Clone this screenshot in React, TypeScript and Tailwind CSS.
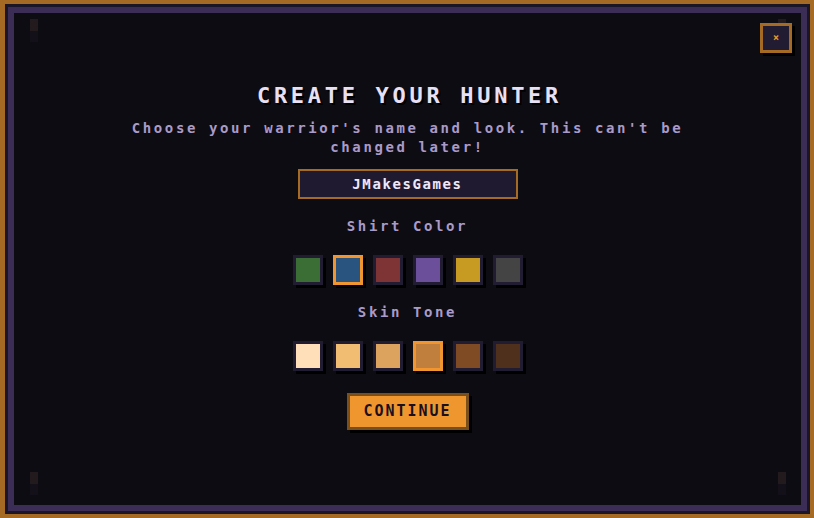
const SHIRTS = ["#3a6e35", "#2a5480", "#7e3434", "#6c4f9a", "#c79a22", "#444444"];
const SKINS = ["#ffdfba", "#f0bd73", "#dca35f", "#c17f3e", "#7f4b24", "#4f301d"];

const mono = { fontFamily: '"DejaVu Sans Mono", "Liberation Mono", monospace' };

function Swatch({ color, selected }: { color: string; selected: boolean }) {
  return (
    <button
      className={`w-[30px] h-[30px] border-[3px] shadow-[3px_3px_0_#000] ${
        selected ? "border-[#f0952f]" : "border-[#221c33]"
      }`}
      style={{ backgroundColor: color }}
    />
  );
}

function Torch({ className }: { className: string }) {
  return (
    <div className={`absolute flex flex-col w-[8px] ${className}`}>
      <div className="h-[12px] bg-[#221a1d]" />
      <div className="h-[11px] bg-[#13101a]" />
    </div>
  );
}

export default function App() {
  return (
    <div className="w-[814px] h-[518px] bg-[#a56a24] pt-[4px] pr-[4px] pb-[4px] pl-[5px]" style={mono}>
      <div className="w-full h-full bg-[#1a1628] p-[3px]">
        <div className="w-full h-full bg-[#3b2d55] p-[6px]">
          <div className="relative w-full h-full bg-[#0e0c13] flex flex-col items-center pt-[71px]">
            <Torch className="left-[16px] top-[6px]" />
            <Torch className="right-[15px] top-[6px]" />
            <Torch className="left-[16px] bottom-[10px]" />
            <Torch className="right-[15px] bottom-[10px]" />

            <button className="absolute top-[10px] right-[9px] w-[32px] h-[30px] bg-[#221c33] border-[3px] border-[#a56a24] shadow-[3px_3px_0_#000] flex items-center justify-center text-[#f0952f] text-[10px] leading-none font-bold">
              ×
            </button>

            <h1 className="text-[22px] leading-[24px] font-bold tracking-[3.7px] text-[#e8e0f5] [text-shadow:2px_2px_0_#000] pl-[4px]">
              CREATE YOUR HUNTER
            </h1>
            <p className="mt-[11px] w-[560px] text-center text-[14px] leading-[19px] font-bold tracking-[2.6px] text-[#a99bc9]">
              Choose your warrior's name and look. This can't be changed later!
            </p>

            <div className="mt-[12px] w-[220px] h-[30px] border-2 border-[#a56a24] bg-[#201a30] flex items-center justify-center text-[14px] font-bold tracking-[1.6px] text-[#efe8fa]">
              JMakesGames
            </div>

            <div className="mt-[17px] h-[20px] leading-[20px] text-[14px] font-bold tracking-[2.6px] text-[#a99bc9]">
              Shirt Color
            </div>
            <div className="mt-[19px] flex gap-[10px]">
              {SHIRTS.map((c, i) => (
                <Swatch key={c} color={c} selected={i === 1} />
              ))}
            </div>

            <div className="mt-[17px] h-[20px] leading-[20px] text-[14px] font-bold tracking-[2.6px] text-[#a99bc9]">
              Skin Tone
            </div>
            <div className="mt-[19px] flex gap-[10px]">
              {SKINS.map((c, i) => (
                <Swatch key={c} color={c} selected={i === 3} />
              ))}
            </div>

            <button className="mt-[22px] w-[122px] h-[37px] bg-[#f0962f] border-[3px] border-[#7a4f1e] shadow-[3px_3px_0_#000] text-[15px] font-bold tracking-[2px] text-[#1a1020]">
              CONTINUE
            </button>
          </div>
        </div>
      </div>
    </div>
  );
}
